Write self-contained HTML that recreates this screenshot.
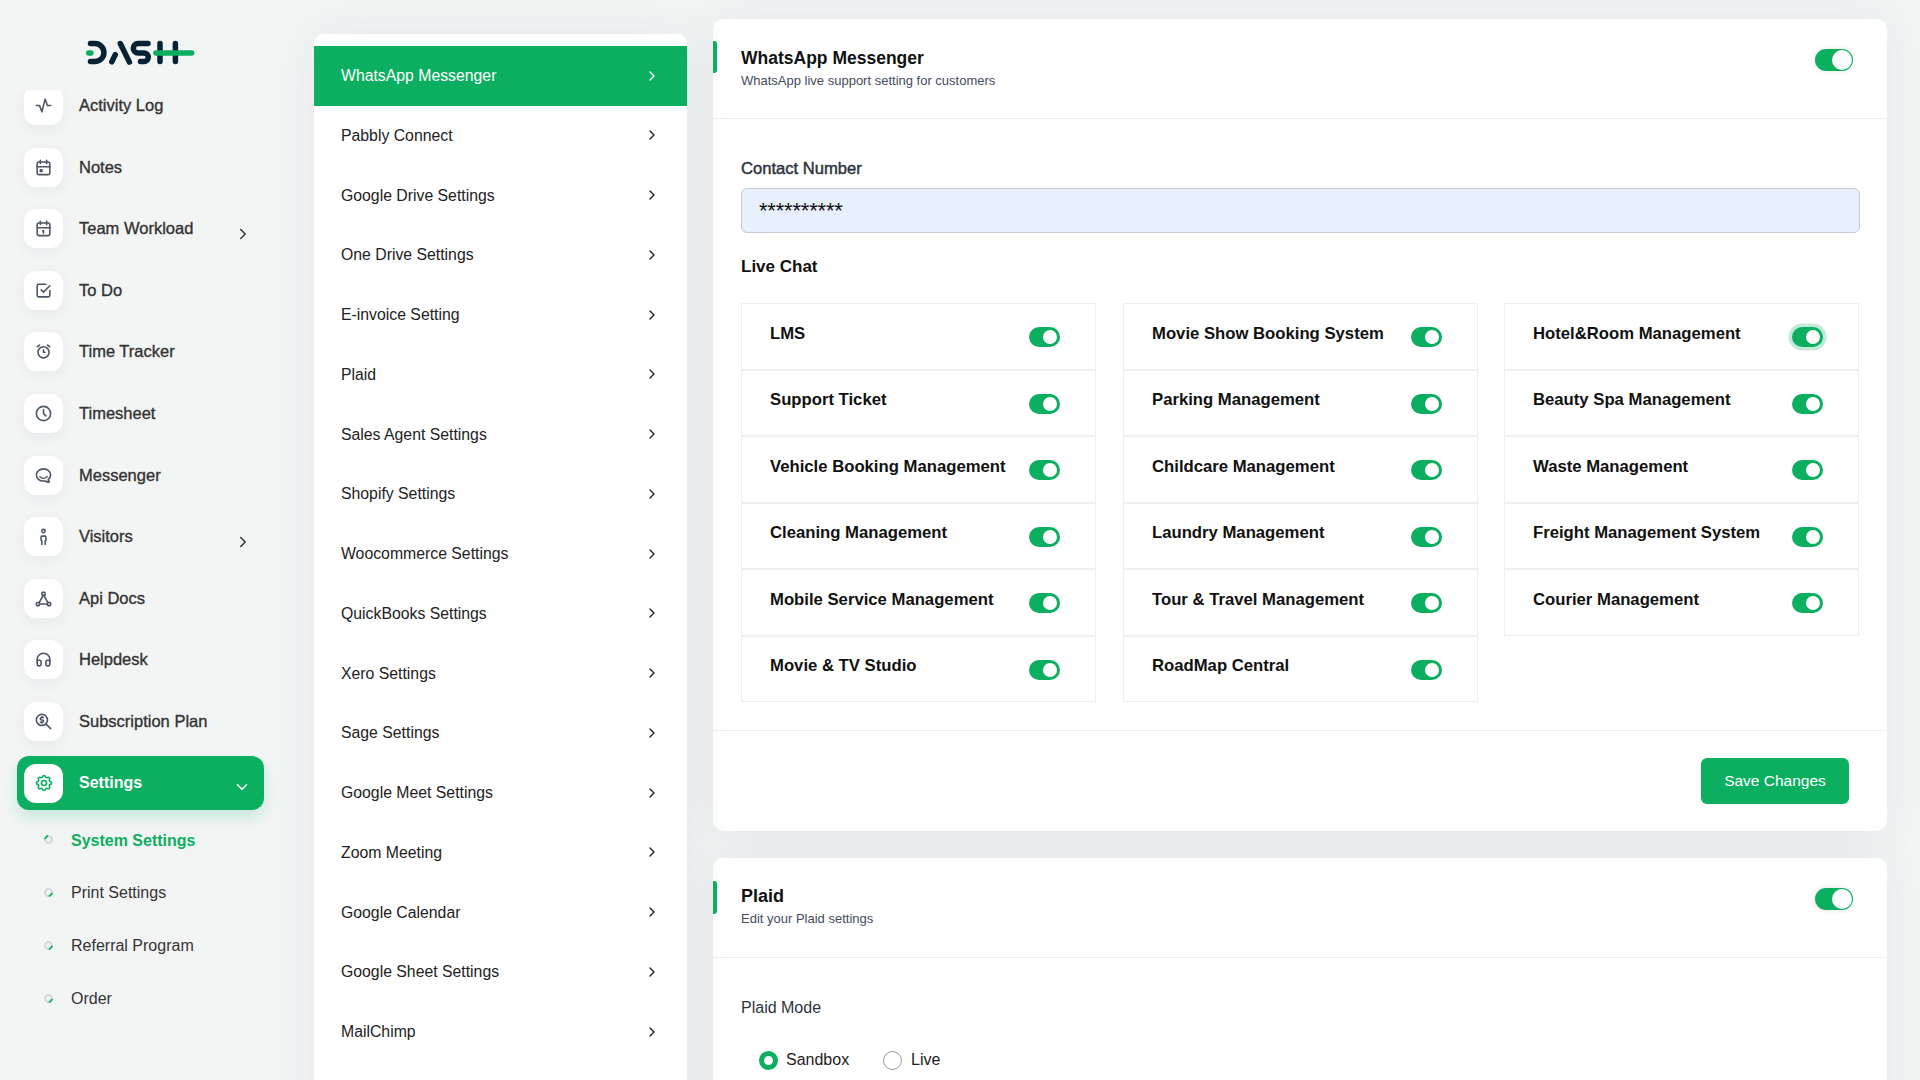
<!DOCTYPE html>
<html><head><meta charset="utf-8">
<style>
*{box-sizing:border-box;margin:0;padding:0}
html,body{width:1920px;height:1080px;overflow:hidden}
body{background:#f3f5f5;font-family:"Liberation Sans",sans-serif;position:relative;color:#222}
.abs{position:absolute}
/* sidebar */
.side{position:absolute;left:0;top:0;width:290px;height:1080px;overflow:hidden}
.logo{position:absolute;left:0;top:0;width:240px;height:90px;background:#f3f5f5;z-index:2}
.nav{position:absolute;left:24px;height:39px;width:250px}
.ib{position:absolute;left:0;top:0;width:39px;height:39px;background:#fff;border-radius:12px;box-shadow:0 4px 14px rgba(40,50,60,.06)}
.ib svg{position:absolute;left:10px;top:10px;width:19px;height:19px;fill:none;stroke:#4b5563;stroke-width:2;stroke-linecap:round;stroke-linejoin:round}
.nl{position:absolute;left:55px;top:0px;line-height:39px;font-size:16.5px;color:#333;white-space:nowrap;-webkit-text-stroke:0.35px #333}
.chev{position:absolute;width:18px;height:18px;fill:none;stroke:#333;stroke-width:2;stroke-linecap:round;stroke-linejoin:round}
.active{position:absolute;left:17px;top:756px;width:247px;height:54px;background:#0caf60;border-radius:12px;box-shadow:0 8px 16px rgba(12,175,96,.18)}
.sub{position:absolute;left:71px;margin-top:1px;font-size:16px;color:#333;white-space:nowrap}
.dot{position:absolute;left:44px;width:9px;height:9px;border-radius:50%;border:2px solid #d1d6de;border-bottom-color:#0caf60;transform:rotate(-45deg)}
.dot.on{border-bottom-color:#d1d6de;border-top-color:#0caf60}
/* middle */
.mid{position:absolute;z-index:3;left:314px;top:34px;width:373px;height:1100px;background:#fff;border-radius:10px;box-shadow:0 0 50px rgba(40,60,80,.075);padding-top:12px}
.mi{position:relative;height:59.75px;font-size:15.8px;color:#222;padding-left:27px;line-height:59.75px;white-space:nowrap}
.mi.on{background:#0caf60;color:#fff}
.mi svg{position:absolute;left:330px;top:21.5px;width:16px;height:16px;fill:none;stroke:#222;stroke-width:2.1;stroke-linecap:round;stroke-linejoin:round}
.mi.on svg{stroke:#fff}
/* right cards */
.card{position:absolute;z-index:1;left:713px;width:1174px;background:#fff;border-radius:10px;box-shadow:0 0 50px rgba(40,60,80,.075)}
.acc{position:absolute;left:0;width:4px;background:#0caf60;border-radius:0 3px 3px 0}
.ttl{position:absolute;left:28px;font-size:18px;font-weight:bold;color:#111;white-space:nowrap}
.stl{position:absolute;left:28px;font-size:13px;color:#444c5c;white-space:nowrap}
.hr{position:absolute;left:0;width:1174px;height:1px;background:#eceef0}
.tg{position:absolute;width:38px;height:22px;border-radius:11px;background:#0caf60;box-shadow:0 0 6px rgba(0,0,0,.1)}
.tg::after{content:"";position:absolute;right:1px;top:1px;width:20px;height:20px;border-radius:50%;background:#fff}
.cell{position:absolute;width:355px;height:66.5px;border:1px solid #efefef}
.cl{position:absolute;left:28px;top:19.5px;font-size:16.7px;font-weight:bold;color:#111;white-space:nowrap}
.st{position:absolute;left:287px;top:23px;width:31px;height:20px;border-radius:10px;background:#0caf60}
.st::after{content:"";position:absolute;left:13.5px;top:3px;width:14px;height:14px;border-radius:50%;background:#fff}
</style></head><body>

<div class="side">
<div class="nav" style="top:86.0px"><div class="ib"><svg viewBox="0 0 24 24"><path d="M3 12h4l3 8l4 -16l3 8h4"/></svg></div><div class="nl">Activity Log</div></div>
<div class="nav" style="top:147.6px"><div class="ib"><svg viewBox="0 0 24 24"><path d="M4 7a2 2 0 0 1 2 -2h12a2 2 0 0 1 2 2v12a2 2 0 0 1 -2 2h-12a2 2 0 0 1 -2 -2v-12z"/><path d="M16 3v4"/><path d="M8 3v4"/><path d="M4 11h16"/><path d="M8 15h2v2h-2z"/></svg></div><div class="nl">Notes</div></div>
<div class="nav" style="top:209.2px"><div class="ib"><svg viewBox="0 0 24 24"><path d="M4 7a2 2 0 0 1 2 -2h12a2 2 0 0 1 2 2v12a2 2 0 0 1 -2 2h-12a2 2 0 0 1 -2 -2v-12z"/><path d="M16 3v4"/><path d="M8 3v4"/><path d="M4 11h16"/><path d="M11 15h1v3"/></svg></div><div class="nl">Team Workload</div><svg class="chev" style="left:210px;top:16px" viewBox="0 0 24 24"><path d="M9 6l6 6l-6 6"/></svg></div>
<div class="nav" style="top:270.8px"><div class="ib"><svg viewBox="0 0 24 24"><path d="M9 11l3 3l8 -8"/><path d="M20 12v6a2 2 0 0 1 -2 2h-12a2 2 0 0 1 -2 -2v-12a2 2 0 0 1 2 -2h9"/></svg></div><div class="nl">To Do</div></div>
<div class="nav" style="top:332.4px"><div class="ib"><svg viewBox="0 0 24 24"><path d="M5 13a7 7 0 1 0 14 0a7 7 0 0 0 -14 0z"/><path d="M12 10v3h2"/><path d="M7 4l-2.75 2"/><path d="M17 4l2.75 2"/></svg></div><div class="nl">Time Tracker</div></div>
<div class="nav" style="top:394.0px"><div class="ib"><svg viewBox="0 0 24 24"><path d="M3 12a9 9 0 1 0 18 0a9 9 0 0 0 -18 0"/><path d="M12 7v5l3 3"/></svg></div><div class="nl">Timesheet</div></div>
<div class="nav" style="top:455.6px"><div class="ib"><svg viewBox="0 0 24 24"><path d="M17.802 17.292s.077 -.055 .2 -.149c1.843 -1.425 3 -3.49 3 -5.789c0 -4.286 -4.03 -7.764 -9 -7.764c-4.97 0 -9 3.478 -9 7.764c0 4.288 4.03 7.646 9 7.646c.424 0 1.12 -.028 2.088 -.084c1.262 .82 3.104 1.493 4.716 1.493c.499 0 .734 -.41 .414 -.828c-.486 -.596 -1.156 -1.551 -1.416 -2.29z"/><path d="M7.5 13.5c2.5 2.5 6.5 2.5 9 0"/></svg></div><div class="nl">Messenger</div></div>
<div class="nav" style="top:517.2px"><div class="ib"><svg viewBox="0 0 24 24"><path d="M9.9 5.1a2.1 2.1 0 1 0 4.2 0a2.1 2.1 0 1 0 -4.2 0"/><path d="M9.9 22V17.5L8.9 16.8V12.5a1 1 0 0 1 1 -1h4.2a1 1 0 0 1 1 1V16.8L14.1 17.5V22"/></svg></div><div class="nl">Visitors</div><svg class="chev" style="left:210px;top:16px" viewBox="0 0 24 24"><path d="M9 6l6 6l-6 6"/></svg></div>
<div class="nav" style="top:578.8px"><div class="ib"><svg viewBox="0 0 24 24"><path d="M10 5a1 1 0 0 1 1 -1h2a1 1 0 0 1 1 1v2a1 1 0 0 1 -1 1h-2a1 1 0 0 1 -1 -1z"/><path d="M3 18a1 1 0 0 1 1 -1h2a1 1 0 0 1 1 1v2a1 1 0 0 1 -1 1h-2a1 1 0 0 1 -1 -1z"/><path d="M17 18a1 1 0 0 1 1 -1h2a1 1 0 0 1 1 1v2a1 1 0 0 1 -1 1h-2a1 1 0 0 1 -1 -1z"/><path d="M6.5 17.1l5 -9.1"/><path d="M17.5 17.1l-5 -9.1"/><path d="M7 19h10"/></svg></div><div class="nl">Api Docs</div></div>
<div class="nav" style="top:640.4px"><div class="ib"><svg viewBox="0 0 24 24"><path d="M4 15a2 2 0 0 1 2 -2h1a2 2 0 0 1 2 2v3a2 2 0 0 1 -2 2h-1a2 2 0 0 1 -2 -2z"/><path d="M15 15a2 2 0 0 1 2 -2h1a2 2 0 0 1 2 2v3a2 2 0 0 1 -2 2h-1a2 2 0 0 1 -2 -2z"/><path d="M4 15v-3a8 8 0 0 1 16 0v3"/></svg></div><div class="nl">Helpdesk</div></div>
<div class="nav" style="top:702.0px"><div class="ib"><svg viewBox="0 0 24 24"><path d="M3 10a7 7 0 1 0 14 0a7 7 0 1 0 -14 0"/><path d="M21 21l-6 -6"/><path d="M12 7h-2.5a1.5 1.5 0 0 0 0 3h1a1.5 1.5 0 0 1 0 3h-2.5"/><path d="M10 13v1m0 -8v1"/></svg></div><div class="nl">Subscription Plan</div></div>
<div class="active"></div>
<div class="nav" style="top:763.5px"><div class="ib" style="box-shadow:none"><svg viewBox="0 0 24 24" style="stroke:#0caf60;left:9.5px;top:9px;width:20px;height:20px"><path d="M10.325 4.317c.426 -1.756 2.924 -1.756 3.35 0a1.724 1.724 0 0 0 2.573 1.066c1.543 -.94 3.31 .826 2.37 2.37a1.724 1.724 0 0 0 1.065 2.572c1.756 .426 1.756 2.924 0 3.35a1.724 1.724 0 0 0 -1.066 2.573c.94 1.543 -.826 3.31 -2.37 2.37a1.724 1.724 0 0 0 -2.572 1.065c-.426 1.756 -2.924 1.756 -3.35 0a1.724 1.724 0 0 0 -2.573 -1.066c-1.543 .94 -3.31 -.826 -2.37 -2.37a1.724 1.724 0 0 0 -1.065 -2.572c-1.756 -.426 -1.756 -2.924 0 -3.35a1.724 1.724 0 0 0 1.066 -2.573c-.94 -1.543 .826 -3.31 2.37 -2.37c1 .608 2.296 .07 2.572 -1.065z"/><path d="M9 12a3 3 0 1 0 6 0a3 3 0 0 0 -6 0"/></svg></div><div class="nl" style="color:#fff;font-weight:bold;top:-1px;-webkit-text-stroke:0;font-size:16px">Settings</div><svg class="chev" style="left:209px;top:14px;stroke:#fff" viewBox="0 0 24 24"><path d="M6 9l6 6l6 -6"/></svg></div>
<div class="dot on" style="top:834.5px"></div><div class="sub" style="top:828.0px;line-height:24px;color:#0caf60;font-weight:bold">System Settings</div>
<div class="dot" style="top:887.5px"></div><div class="sub" style="top:880.0px;line-height:24px;">Print Settings</div>
<div class="dot" style="top:940.5px"></div><div class="sub" style="top:933.0px;line-height:24px;">Referral Program</div>
<div class="dot" style="top:993.5px"></div><div class="sub" style="top:986.0px;line-height:24px;">Order</div>
  <div class="logo">
    <svg class="abs" style="left:0;top:0" width="290" height="90" viewBox="0 0 290 90" fill="none" stroke-linecap="round" stroke-linejoin="round">
      <g stroke="#062335" stroke-width="5.5">
        <path d="M90.5 43.6H95A8.95 8.95 0 0 1 95 61.5H90.5"/>
        <path d="M115.3 54.6L111.8 61.8"/>
        <path d="M120.3 43.5L129.4 62.1"/>
        <path d="M148 43.6H138A4.7 4.7 0 0 0 138 53H144A4.25 4.25 0 0 1 144 61.5H140.5"/>
        <path d="M160 43.6V61.5M175.4 43.6V61.5"/>
      </g>
      <g stroke="#0caf60" stroke-width="5.6">
        <path d="M88.8 53H90.9"/>
        <path d="M156 53H191.6"/>
      </g>
    </svg>
  </div>
</div>

<div class="mid">
<div class="mi on">WhatsApp Messenger<svg viewBox="0 0 24 24"><path d="M9 6l6 6l-6 6"/></svg></div>
<div class="mi">Pabbly Connect<svg viewBox="0 0 24 24"><path d="M9 6l6 6l-6 6"/></svg></div>
<div class="mi">Google Drive Settings<svg viewBox="0 0 24 24"><path d="M9 6l6 6l-6 6"/></svg></div>
<div class="mi">One Drive Settings<svg viewBox="0 0 24 24"><path d="M9 6l6 6l-6 6"/></svg></div>
<div class="mi">E-invoice Setting<svg viewBox="0 0 24 24"><path d="M9 6l6 6l-6 6"/></svg></div>
<div class="mi">Plaid<svg viewBox="0 0 24 24"><path d="M9 6l6 6l-6 6"/></svg></div>
<div class="mi">Sales Agent Settings<svg viewBox="0 0 24 24"><path d="M9 6l6 6l-6 6"/></svg></div>
<div class="mi">Shopify Settings<svg viewBox="0 0 24 24"><path d="M9 6l6 6l-6 6"/></svg></div>
<div class="mi">Woocommerce Settings<svg viewBox="0 0 24 24"><path d="M9 6l6 6l-6 6"/></svg></div>
<div class="mi">QuickBooks Settings<svg viewBox="0 0 24 24"><path d="M9 6l6 6l-6 6"/></svg></div>
<div class="mi">Xero Settings<svg viewBox="0 0 24 24"><path d="M9 6l6 6l-6 6"/></svg></div>
<div class="mi">Sage Settings<svg viewBox="0 0 24 24"><path d="M9 6l6 6l-6 6"/></svg></div>
<div class="mi">Google Meet Settings<svg viewBox="0 0 24 24"><path d="M9 6l6 6l-6 6"/></svg></div>
<div class="mi">Zoom Meeting<svg viewBox="0 0 24 24"><path d="M9 6l6 6l-6 6"/></svg></div>
<div class="mi">Google Calendar<svg viewBox="0 0 24 24"><path d="M9 6l6 6l-6 6"/></svg></div>
<div class="mi">Google Sheet Settings<svg viewBox="0 0 24 24"><path d="M9 6l6 6l-6 6"/></svg></div>
<div class="mi">MailChimp<svg viewBox="0 0 24 24"><path d="M9 6l6 6l-6 6"/></svg></div>
<div class="mi">Twilio<svg viewBox="0 0 24 24"><path d="M9 6l6 6l-6 6"/></svg></div>
</div>

<div class="card" style="top:19px;height:812px">
  <div class="acc" style="top:22px;height:32px"></div>
  <div class="ttl" style="top:27px;line-height:24px;font-size:17.5px">WhatsApp Messenger</div>
  <div class="stl" style="top:53px;line-height:18px">WhatsApp live support setting for customers</div>
  <div class="tg" style="left:1102px;top:30px"></div>
  <div class="hr" style="top:99px"></div>
  <div class="abs" style="left:28px;top:137.5px;font-size:16.6px;color:#2d3340;line-height:24px;white-space:nowrap;-webkit-text-stroke:0.45px #2d3340">Contact Number</div>
  <div class="abs" style="left:28px;top:169px;width:1119px;height:45px;background:#e8f0fe;border:1px solid #c5ccd6;border-radius:6px"></div>
  <div class="abs" style="left:46px;top:178px;font-size:22px;color:#111;line-height:28px;letter-spacing:-0.2px">**********</div>
  <div class="abs" style="left:28px;top:236px;font-size:17px;font-weight:bold;color:#111;line-height:24px">Live Chat</div>
  <div class="cell" style="left:28px;top:284.0px"><div class="cl">LMS</div><div class="st"></div></div>
  <div class="cell" style="left:28px;top:350.5px"><div class="cl">Support Ticket</div><div class="st"></div></div>
  <div class="cell" style="left:28px;top:417.0px"><div class="cl">Vehicle Booking Management</div><div class="st"></div></div>
  <div class="cell" style="left:28px;top:483.5px"><div class="cl">Cleaning Management</div><div class="st"></div></div>
  <div class="cell" style="left:28px;top:550.0px"><div class="cl">Mobile Service Management</div><div class="st"></div></div>
  <div class="cell" style="left:28px;top:616.5px"><div class="cl">Movie &amp; TV Studio</div><div class="st"></div></div>
  <div class="cell" style="left:410px;top:284.0px"><div class="cl">Movie Show Booking System</div><div class="st"></div></div>
  <div class="cell" style="left:410px;top:350.5px"><div class="cl">Parking Management</div><div class="st"></div></div>
  <div class="cell" style="left:410px;top:417.0px"><div class="cl">Childcare Management</div><div class="st"></div></div>
  <div class="cell" style="left:410px;top:483.5px"><div class="cl">Laundry Management</div><div class="st"></div></div>
  <div class="cell" style="left:410px;top:550.0px"><div class="cl">Tour &amp; Travel Management</div><div class="st"></div></div>
  <div class="cell" style="left:410px;top:616.5px"><div class="cl">RoadMap Central</div><div class="st"></div></div>
  <div class="cell" style="left:791px;top:284.0px"><div class="cl">Hotel&amp;Room Management</div><div class="st" style="box-shadow:0 0 0 3.5px rgba(12,175,96,.25)"></div></div>
  <div class="cell" style="left:791px;top:350.5px"><div class="cl">Beauty Spa Management</div><div class="st"></div></div>
  <div class="cell" style="left:791px;top:417.0px"><div class="cl">Waste Management</div><div class="st"></div></div>
  <div class="cell" style="left:791px;top:483.5px"><div class="cl">Freight Management System</div><div class="st"></div></div>
  <div class="cell" style="left:791px;top:550.0px"><div class="cl">Courier Management</div><div class="st"></div></div>
  <div class="hr" style="top:711px"></div>
  <div class="abs" style="left:988px;top:739px;width:148px;height:46px;background:#0caf60;border-radius:6px;color:#fff;font-size:15.5px;line-height:46px;text-align:center">Save Changes</div>
</div>
<div class="card" style="top:858px;height:300px">
  <div class="acc" style="top:23px;height:33px"></div>
  <div class="ttl" style="top:26px;line-height:24px">Plaid</div>
  <div class="stl" style="top:52px;line-height:18px">Edit your Plaid settings</div>
  <div class="tg" style="left:1102px;top:30px"></div>
  <div class="hr" style="top:99px"></div>
  <div class="abs" style="left:28px;top:138px;font-size:16px;color:#2d3340;line-height:24px">Plaid Mode</div>
  <div class="abs" style="left:46px;top:193px;width:19px;height:19px;border-radius:50%;border:5.5px solid #0caf60;background:#fff"></div>
  <div class="abs" style="left:73px;top:190px;font-size:16px;color:#222;line-height:24px">Sandbox</div>
  <div class="abs" style="left:170px;top:193px;width:19px;height:19px;border-radius:50%;border:1px solid #999;background:#fff"></div>
  <div class="abs" style="left:198px;top:190px;font-size:16px;color:#222;line-height:24px">Live</div>
</div>

</body></html>
